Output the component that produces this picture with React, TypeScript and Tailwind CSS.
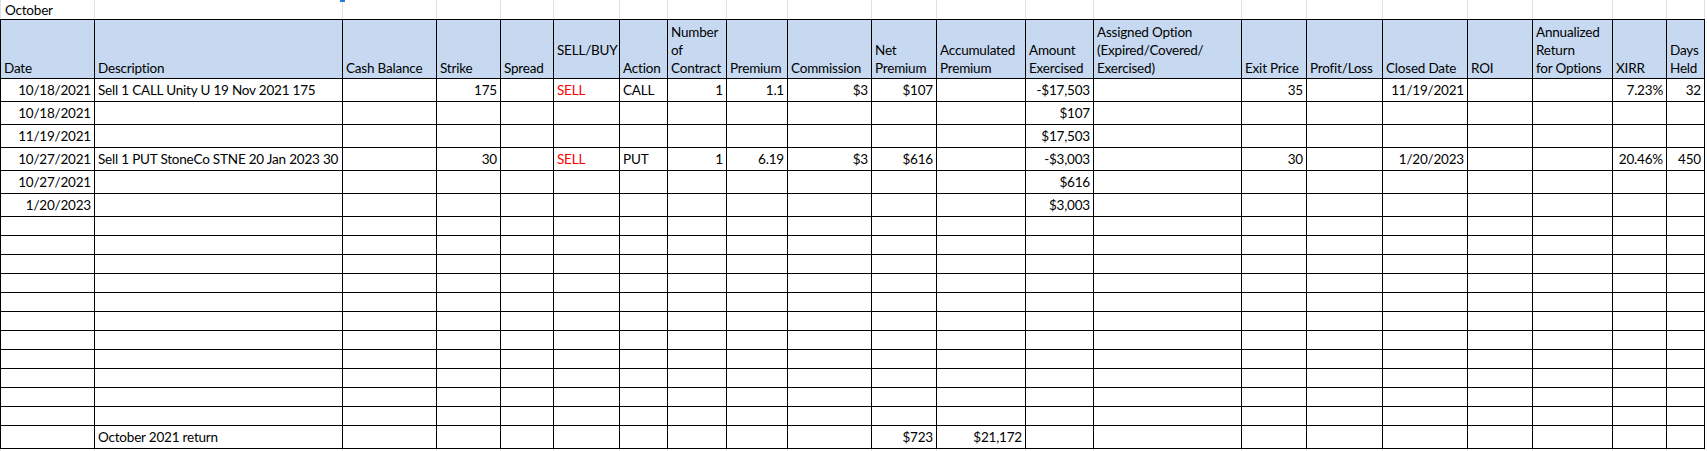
import React from "react";

// column widths (px), first one includes the left border
const gridCols =
  "grid grid-cols-[95px_248px_94px_64px_53px_66px_48px_59px_61px_84px_65px_89px_68px_148px_65px_76px_85px_65px_80px_54px_38px]";

const COLS = 21;
const RIGHT = new Set([0, 3, 7, 8, 9, 10, 11, 12, 14, 16, 19, 20]);

const headers: string[][] = [
  ["Date"],
  ["Description"],
  ["Cash Balance"],
  ["Strike"],
  ["Spread"],
  ["SELL/BUY", "\u00a0"],
  ["Action"],
  ["Number", "of", "Contract"],
  ["Premium"],
  ["Commission"],
  ["Net", "Premium"],
  ["Accumulated", "Premium"],
  ["Amount", "Exercised"],
  ["Assigned Option", "(Expired/Covered/", "Exercised)"],
  ["Exit Price"],
  ["Profit/Loss"],
  ["Closed Date"],
  ["ROI"],
  ["Annualized", "Return", "for Options"],
  ["XIRR"],
  ["Days", "Held"],
];

type Row = Record<number, string>;

const dataRows: Row[] = [
  {
    0: "10/18/2021",
    1: "Sell 1 CALL Unity U 19 Nov 2021 175",
    3: "175",
    5: "SELL",
    6: "CALL",
    7: "1",
    8: "1.1",
    9: "$3",
    10: "$107",
    12: "-$17,503",
    14: "35",
    16: "11/19/2021",
    19: "7.23%",
    20: "32",
  },
  { 0: "10/18/2021", 12: "$107" },
  { 0: "11/19/2021", 12: "$17,503" },
  {
    0: "10/27/2021",
    1: "Sell 1 PUT StoneCo STNE 20 Jan 2023 30",
    3: "30",
    5: "SELL",
    6: "PUT",
    7: "1",
    8: "6.19",
    9: "$3",
    10: "$616",
    12: "-$3,003",
    14: "30",
    16: "1/20/2023",
    19: "20.46%",
    20: "450",
  },
  { 0: "10/27/2021", 12: "$616" },
  { 0: "1/20/2023", 12: "$3,003" },
];

const totalRow: Row = { 1: "October 2021 return", 10: "$723", 11: "$21,172" };

const range = Array.from({ length: COLS }, (_, i) => i);

const DataLine = ({ row, tall }: { row: Row; tall: boolean }) => (
  <>
    {range.map((i) => (
      <div
        key={i}
        className={`flex items-end overflow-hidden whitespace-nowrap border-r border-b border-black px-[3px] pb-[2px] leading-[18px] ${
          tall ? "h-[23px]" : "h-[19px]"
        } ${i === 0 ? "border-l" : ""} ${RIGHT.has(i) ? "justify-end" : "justify-start"} ${
          i === 5 ? "text-[#ff0000]" : ""
        }`}
      >
        {row[i] ?? ""}
      </div>
    ))}
  </>
);

export default function App() {
  return (
    <div className="min-h-[451px] w-[1707px] bg-white font-['Lato',sans-serif] text-[13.5px] tracking-[-0.2px] text-black">
      <div className={gridCols}>
        {/* top sheet row */}
        {range.map((i) => (
          <div
            key={`t${i}`}
            className={`relative flex h-[19px] items-center border-r border-[#e1e1e1] px-[4px] leading-[18px] ${
              i === 0 ? "border-l" : ""
            }`}
          >
            {i === 0 ? "October" : ""}
            {i === 1 && (
              <span className="absolute -right-[3px] top-0 h-[2px] w-[5px] bg-[#2b78e4]" />
            )}
          </div>
        ))}

        {/* header */}
        {headers.map((lines, i) => (
          <div
            key={`h${i}`}
            className={`flex h-[60px] flex-col justify-end overflow-hidden whitespace-nowrap border-t border-r border-b border-black bg-[#c6d9f0] px-[3px] pb-[1px] leading-[18px] ${
              i === 0 ? "border-l" : ""
            }`}
          >
            {lines.map((l, k) => (
              <span key={k}>{l}</span>
            ))}
          </div>
        ))}

        {dataRows.map((r, k) => (
          <DataLine key={`d${k}`} row={r} tall />
        ))}
        {Array.from({ length: 11 }, (_, k) => (
          <DataLine key={`e${k}`} row={{}} tall={false} />
        ))}
        <DataLine row={totalRow} tall />

        {/* sheet gridlines below the table */}
        {range.map((i) => (
          <div
            key={`b${i}`}
            className={`h-[3px] border-r border-[#e1e1e1] ${i === 0 ? "border-l" : ""}`}
          />
        ))}
      </div>
    </div>
  );
}
